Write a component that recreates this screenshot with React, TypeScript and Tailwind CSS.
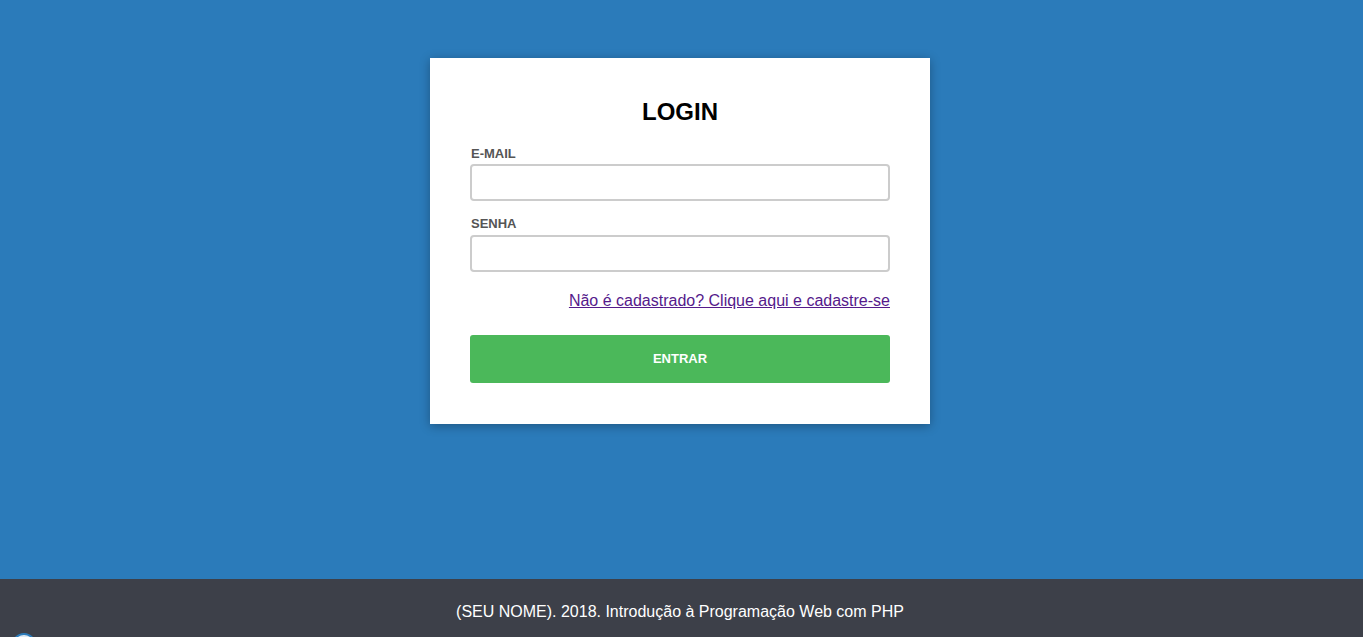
export default function App() {
  return (
    <div className="min-h-[637px] flex flex-col bg-[#2b7bba] font-['Liberation_Sans',Arial,sans-serif] relative overflow-hidden">
      <main className="flex-1 flex justify-center pt-[58px] pr-[3px]">
        <div className="w-[500px] h-[366px] bg-white px-10 pt-[40px] shadow-[0_2px_10px_rgba(0,0,0,0.3)]">
          <h1 className="text-center text-[24px] font-bold text-black leading-[28px]">LOGIN</h1>
          <form className="mt-[20px]">
            <label className="block text-[13px] font-bold text-[#555] leading-[14px] pl-[1px] pt-[1px] -mb-[1px]">E-MAIL</label>
            <input
              type="text"
              className="mt-[4px] block w-full h-[37px] border-2 border-[#ccc] rounded-[4px] outline-none"
            />
            <label className="block mt-[15px] text-[13px] font-bold text-[#555] leading-[14px] pl-[1px] pt-[1px] -mb-[1px]">SENHA</label>
            <input
              type="password"
              className="mt-[5px] block w-full h-[37px] border-2 border-[#ccc] rounded-[4px] outline-none"
            />
            <div className="mt-[19px] text-right leading-[20px]">
              <a href="#" className="text-[16px] text-[#551a8b] underline">
                Não é cadastrado? Clique aqui e cadastre-se
              </a>
            </div>
            <button
              type="button"
              className="mt-[24px] w-full h-[48px] bg-[#4bb85a] rounded-[3px] text-white text-[13px] font-bold"
            >
              ENTRAR
            </button>
          </form>
        </div>
      </main>
      <footer className="h-[58px] bg-[#3d4049] text-white text-[16px] text-center pt-[21px] pr-[3px]">
        (SEU NOME). 2018. Introdução à Programação Web com PHP
      </footer>
      <div className="absolute left-[12px] top-[633px] w-[24px] h-[24px] rounded-full bg-[#dfe8f0] border-2 border-[#2b7bba]" />
    </div>
  );
}
